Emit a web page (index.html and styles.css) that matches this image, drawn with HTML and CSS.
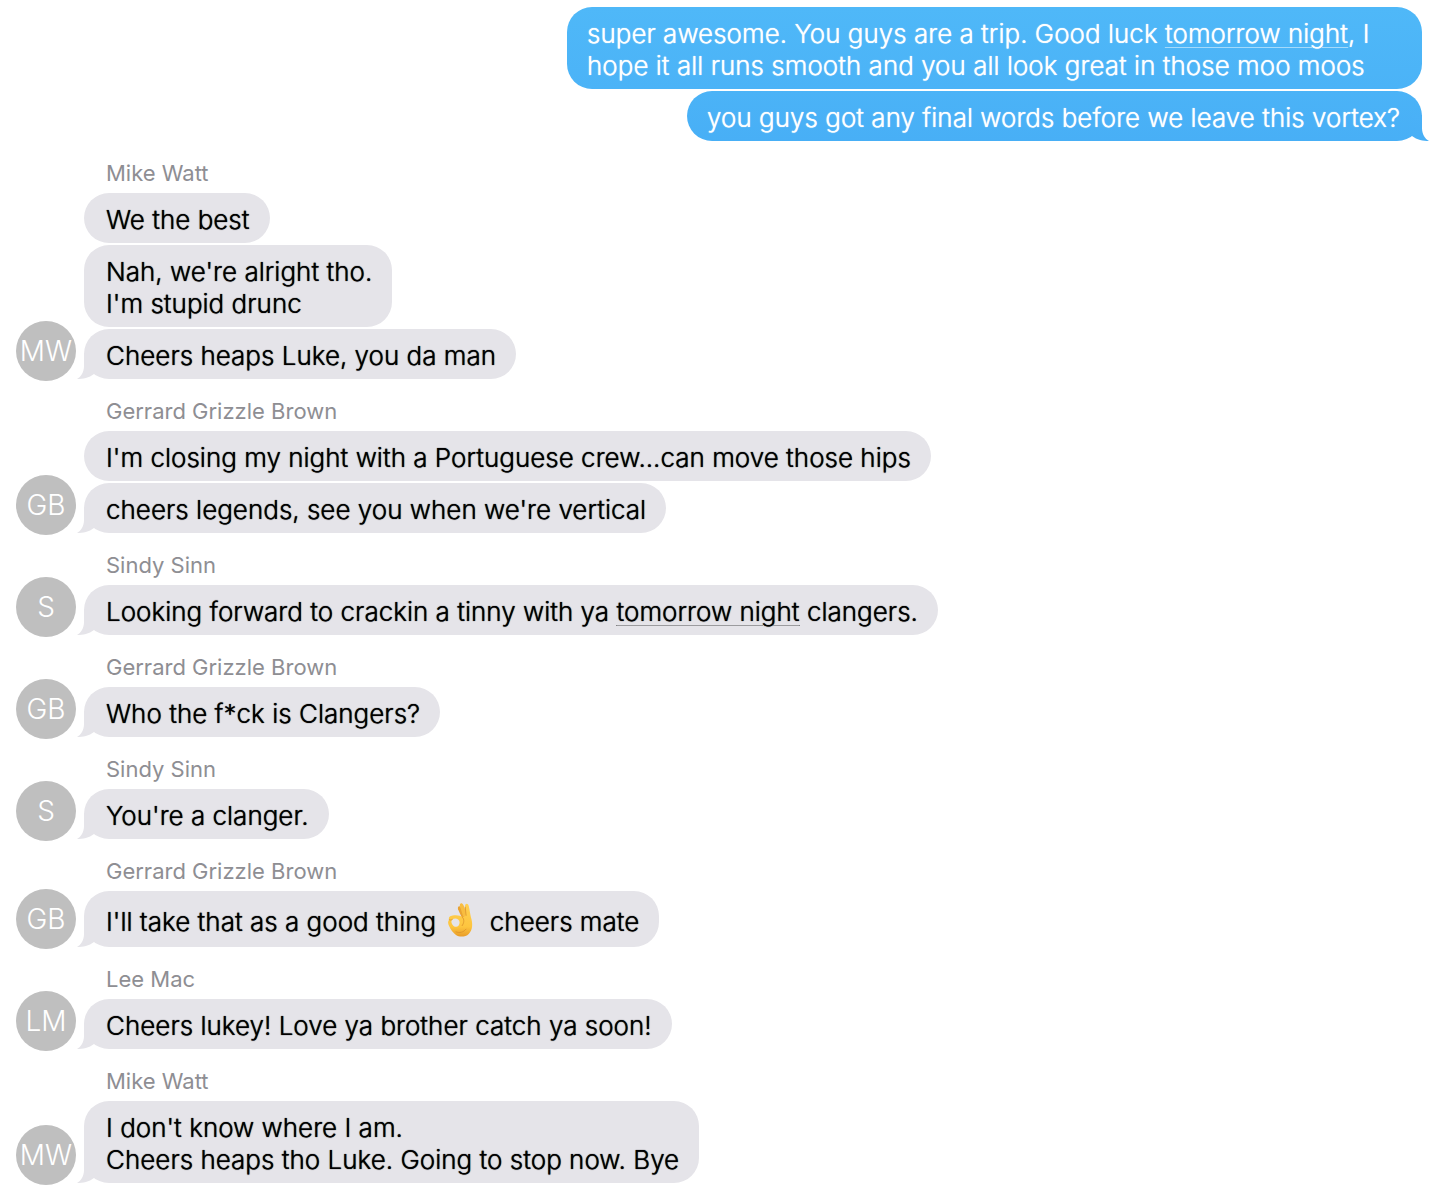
FILE: index.html
```
<!DOCTYPE html>
<html lang="en">
<head>
  <meta charset="UTF-8">
  <meta name="viewport" content="width=device-width, initial-scale=1.0">
  <title>Messages</title>
  <link rel="stylesheet" href="styles.css">
</head>
<body>
  <main class="thread">
    <section class="sent">
      <p class="bubble">super awesome. You guys are a trip. Good luck <a href="#">tomorrow night</a>, I hope it all runs smooth and you all look great in those moo moos</p>
      <p class="bubble tail">you guys got any final words before we leave this vortex?</p>
    </section>

    <section class="received">
      <div class="avatar">MW</div>
      <div class="messages">
        <h2 class="sender">Mike Watt</h2>
        <p class="bubble">We the best</p>
        <p class="bubble">Nah, we're alright tho.<br>I'm stupid drunc</p>
        <p class="bubble tail">Cheers heaps Luke, you da man</p>
      </div>
    </section>

    <section class="received">
      <div class="avatar">GB</div>
      <div class="messages">
        <h2 class="sender">Gerrard Grizzle Brown</h2>
        <p class="bubble">I'm closing my night with a Portuguese crew...can move those hips</p>
        <p class="bubble tail">cheers legends, see you when we're vertical</p>
      </div>
    </section>

    <section class="received">
      <div class="avatar">S</div>
      <div class="messages">
        <h2 class="sender">Sindy Sinn</h2>
        <p class="bubble tail">Looking forward to crackin a tinny with ya <a href="#">tomorrow night</a> clangers.</p>
      </div>
    </section>

    <section class="received">
      <div class="avatar">GB</div>
      <div class="messages">
        <h2 class="sender">Gerrard Grizzle Brown</h2>
        <p class="bubble tail">Who the f*ck is Clangers?</p>
      </div>
    </section>

    <section class="received">
      <div class="avatar">S</div>
      <div class="messages">
        <h2 class="sender">Sindy Sinn</h2>
        <p class="bubble tail">You're a clanger.</p>
      </div>
    </section>

    <section class="received">
      <div class="avatar">GB</div>
      <div class="messages">
        <h2 class="sender">Gerrard Grizzle Brown</h2>
        <p class="bubble tail">I'll take that as a good thing
          <svg class="emoji" viewBox="10 7 27 35" role="img" aria-label="OK hand">
            <defs>
              <linearGradient id="skin" x1="0" y1="0" x2="0" y2="1">
                <stop offset="0" stop-color="#ffd052"/>
                <stop offset="0.7" stop-color="#fdc53f"/>
                <stop offset="1" stop-color="#e99c28"/>
              </linearGradient>
            </defs>
            <!-- back fingers -->
            <path d="M25.6 23 L21.6 14 C20.8 11.4 23 10.2 24.4 12.4 L29 21 Z" fill="#e9a232"/>
            <path d="M26.6 21 L23.4 11 C22.8 8 25.4 7.2 26.8 9.8 L31 20 Z" fill="#f8bd40"/>
            <!-- palm with the thumb and index ring -->
            <path fill-rule="evenodd" fill="url(#skin)" d="M29 20 L28.4 11 C28.4 8.2 31.4 8 32 10.8 C33 15 33.2 18 34.2 22 C36 28 36 34 32 38 C29 41 23 41.4 19.6 39 C16.5 36.5 14.5 34 13 30.5 C11.6 28 11.5 25.4 13 24.2 C12 22 14 20.4 16.4 20.2 C20 19.4 24 20 26 22 Z M16 24 C14.8 25.2 14.8 27 16.2 29 C18 31.4 20.4 31.8 22 30 C23.6 28 23.4 25.4 22 24.2 C20.2 22.8 17.6 22.8 16 24 Z"/>
            <path d="M26 22 C28 24 27.4 27.6 25.6 30 M13 24.2 C14 24.8 15 24.6 16 24 M19.6 36 C23 37.6 27 36.4 29.4 33.4 M28.6 12 L29.4 20" fill="none" stroke="#dc922b" stroke-width="0.8" stroke-linecap="round"/>
          </svg>
          cheers mate</p>
      </div>
    </section>

    <section class="received">
      <div class="avatar">LM</div>
      <div class="messages">
        <h2 class="sender">Lee Mac</h2>
        <p class="bubble tail">Cheers lukey! Love ya brother catch ya soon!</p>
      </div>
    </section>

    <section class="received">
      <div class="avatar">MW</div>
      <div class="messages">
        <h2 class="sender">Mike Watt</h2>
        <p class="bubble tail">I don't know where I am.<br>Cheers heaps tho Luke. Going to stop now. Bye</p>
      </div>
    </section>
  </main>
</body>
</html>
```
FILE: styles.css
```
body {
  margin: 0;
  background-color: #fff;
  color: #000;
  font-family: Inter, "Liberation Sans", sans-serif;
  font-size: 26px;
  font-weight: 300;
  line-height: 32px;
}

.thread {
  padding: 7px 30px 11px 16px;
}

.sent,
.messages {
  display: flex;
  flex-direction: column;
  gap: 2px;
}

.sent {
  align-items: flex-end;
}

.received {
  display: flex;
  align-items: flex-end;
  gap: 8px;
}

.messages {
  align-items: flex-start;
}

.sender {
  margin: 0;
  padding: 17px 22px 3px;
  color: #8e8e93;
  font-size: 22px;
  font-weight: 400;
  line-height: 30px;
}

.avatar {
  flex: none;
  width: 60px;
  height: 60px;
  margin-bottom: -2px;
  border-radius: 50%;
  background-color: #bfbfbf;
  color: #fff;
  font-size: 28px;
  line-height: 60px;
  text-align: center;
}

.bubble {
  position: relative;
  box-sizing: border-box;
  max-width: 880px;
  margin: 0;
  padding: 11px 20px 7px 22px;
  border-radius: 25px;
  background-color: #e5e4e9;
  text-shadow: 0 0 1px currentColor;
}

.sent .bubble {
  max-width: 855px;
  padding-left: 20px;
  padding-right: 22px;
  background: linear-gradient(#4fb8f8, #4bb3f7);
  color: #fff;
}

.sent .tail {
  background: linear-gradient(#4bb3f7, #48aff6);
}

/* little hook at the bottom corner of the last bubble */
.tail::after {
  content: "";
  position: absolute;
  left: -7px;
  bottom: 0;
  width: 17px;
  height: 26px;
  background-color: #e5e4e9;
  clip-path: path("M7 0 V13 C7 19 4 24 0 26 C6 26 12 25 17 21 V0 Z");
}

.sent .tail::after {
  left: auto;
  right: -7px;
  background: linear-gradient(#4ab1f7, #48aff6);
  transform: scaleX(-1);
}

.bubble a {
  color: inherit;
  text-decoration: underline;
  text-decoration-color: #9b9b9e;
  text-decoration-thickness: 1px;
  text-underline-offset: 4px;
}

.sent .bubble a {
  text-decoration-color: #a5dafb;
}

.emoji {
  width: 30px;
  height: 36px;
  margin: 0 7px 2px 2px;
  vertical-align: -9px;
}
```
